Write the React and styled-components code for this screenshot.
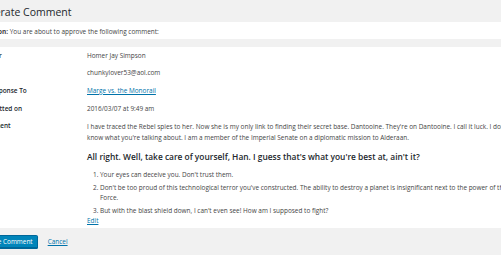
import styled, { createGlobalStyle } from "styled-components";

const GlobalStyle = createGlobalStyle`
  html, body {
    margin: 0;
    padding: 0;
    background: #f1f1f1;
    overflow: hidden;
  }
  body {
    font-family: "Open Sans", "Liberation Sans", sans-serif;
    color: #444;
    font-size: 6.45px;
  }
`;

// the screenshot is cropped on the left, so the page sits a little off-canvas
const Page = styled.div`
  margin-left: -25px;
  width: 620px;
`;

const Title = styled.h1`
  margin: 0 0 0 -2.5px;
  padding: 5px 0 2px;
  font-size: 10.5px;
  line-height: 14.5px;
  font-weight: 400;
  color: #23282d;
`;

const Notice = styled.div`
  background: #fff;
  margin: 0 0 8px;
  padding: 5px 6px 3px;
  line-height: 9px;
  height: 9px;
`;

const Table = styled.table`
  background: #fff;
  border-collapse: collapse;
  width: 100%;
`;

const Label = styled.th`
  width: 107px;
  text-align: left;
  vertical-align: top;
  padding: 5px 0 4px 5px;
  font-weight: 600;
  color: #23282d;
  line-height: 8.7px;
`;

const Value = styled.td`
  vertical-align: top;
  padding: 5px 0 4px;
  line-height: 8.7px;
`;

const Link = styled.a`
  color: #0073aa;
  text-decoration: underline;
`;

const CommentBody = styled.div`
  width: 432px;
  margin: -1px 0 -2px;

  p {
    margin: 0;
    line-height: 11px;
  }
`;

const Heading = styled.h3`
  margin: 7px 0 6px;
  font-size: 8.4px;
  line-height: 14px;
  font-weight: 600;
  color: #23282d;
`;

const List = styled.ol`
  margin: 0;
  padding-left: 13px;
`;

const Item = styled.li`
  line-height: 10px;
  margin-bottom: 3px;

  &:last-child {
    margin-bottom: 1px;
  }
`;

const Actions = styled.div`
  display: flex;
  align-items: center;
  gap: 10px;
  padding: 7px 0;
  margin-left: -4px;
`;

const Button = styled.button`
  font-family: inherit;
  font-size: 6.45px;
  height: 13px;
  padding: 0 4px;
  border-radius: 1.5px;
  border: 1px solid #006799;
  background: #0085ba;
  color: #fff;
  box-shadow: 0 1px 0 #006799;
`;

const rows = [
  ["Author", "Homer Jay Simpson"],
  ["E-mail", "chunkylover53@aol.com"],
];

const App = () => {
  return (
    <>
      <GlobalStyle />
      <Page>
        <Title>Moderate Comment</Title>
        <Notice>
          <strong>Caution:</strong> You are about to approve the following
          comment:
        </Notice>
        <Table>
          <tbody>
            {rows.map(([label, value]) => (
              <tr key={label}>
                <Label>{label}</Label>
                <Value>{value}</Value>
              </tr>
            ))}
            <tr>
              <Label>In Response To</Label>
              <Value>
                <Link href="#">Marge vs. the Monorail</Link>
              </Value>
            </tr>
            <tr>
              <Label>Submitted on</Label>
              <Value>2016/03/07 at 9:49 am</Value>
            </tr>
            <tr>
              <Label>Comment</Label>
              <Value>
                <CommentBody>
                  <p>
                    I have traced the Rebel spies to her. Now she is my only
                    link to finding their secret base. Dantooine. They're on
                    Dantooine. I call it luck. I don't know what you're talking
                    about. I am a member of the Imperial Senate on a diplomatic
                    mission to Alderaan.
                  </p>
                  <Heading>
                    All right. Well, take care of yourself, Han. I guess that's
                    what you're best at, ain't it?
                  </Heading>
                  <List>
                    <Item>Your eyes can deceive you. Don't trust them.</Item>
                    <Item>
                      Don't be too proud of this technological terror you've
                      constructed. The ability to destroy a planet is
                      insignificant next to the power of the Force.
                    </Item>
                    <Item>
                      But with the blast shield down, I can't even see! How am I
                      supposed to fight?
                    </Item>
                  </List>
                  <Link href="#">Edit</Link>
                </CommentBody>
              </Value>
            </tr>
          </tbody>
        </Table>
        <Actions>
          <Button>Approve Comment</Button>
          <Link href="#">Cancel</Link>
        </Actions>
      </Page>
    </>
  );
};

export default App;
